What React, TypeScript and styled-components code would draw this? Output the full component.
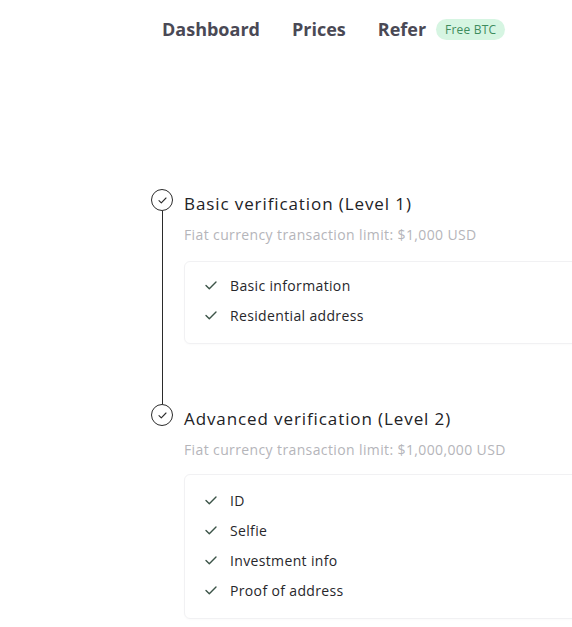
import React from "react";
import styled, { createGlobalStyle } from "styled-components";

const Global = createGlobalStyle`
  html, body { margin: 0; padding: 0; background: #ffffff; overflow: hidden; }
  body { font-family: "Open Sans", "Lato", sans-serif; -webkit-font-smoothing: antialiased; }
`;

const Page = styled.div`
  width: 572px;
  height: 627px;
  overflow: hidden;
  background: #fff;
`;

const Nav = styled.nav`
  display: flex;
  align-items: center;
  height: 58px;
  padding-left: 162px;
  gap: 32px;
`;

const NavLink = styled.span`
  font-size: 18px;
  font-weight: 700;
  color: #4a4955;
`;

const ReferGroup = styled.div`
  display: flex;
  align-items: center;
  gap: 10px;
`;

const Badge = styled.span`
  background: #d6f5e2;
  color: #3e8c5e;
  font-size: 12px;
  font-weight: 500;
  padding: 4px 9px;
  border-radius: 11px;
  line-height: 13px;
  letter-spacing: 0.2px;
`;

const Steps = styled.div`
  padding: 131px 0 0 151px;
  display: flex;
  flex-direction: column;
`;

const Step = styled.div`
  display: grid;
  grid-template-columns: 22px 1fr;
  column-gap: 11px;
`;

const Marker = styled.div`
  display: flex;
  flex-direction: column;
  align-items: center;
`;

const Circle = styled.div`
  width: 20px;
  height: 20px;
  border: 1px solid #2b2b2b;
  border-radius: 50%;
  display: flex;
  align-items: center;
  justify-content: center;
  flex-shrink: 0;
`;

const Connector = styled.div`
  flex: 1;
  width: 1px;
  background: #2b2b2b;
`;

const Body = styled.div<{ $last?: boolean }>`
  padding-bottom: ${(p) => (p.$last ? "0" : "60px")};
`;

const Title = styled.div`
  font-size: 17px;
  line-height: 22px;
  color: #222226;
  margin-top: 4px;
  letter-spacing: 0.9px;
`;

const Subtitle = styled.div`
  font-size: 14px;
  line-height: 18px;
  color: #b5b5ba;
  margin-top: 11px;
  letter-spacing: 0.38px;
`;

const Card = styled.div<{ $tight?: boolean }>`
  margin-top: ${(p) => (p.$tight ? "15px" : "17px")};
  width: 430px;
  border: 1px solid #f1f1f3;
  border-radius: 6px;
  padding: ${(p) => (p.$tight ? "10px 0 13px 0" : "8px 0 13px 0")};
  box-shadow: 0 1px 2px rgba(0, 0, 0, 0.02);
`;

const Item = styled.div`
  display: flex;
  align-items: center;
  height: 30px;
  padding-left: 20px;
  gap: 13px;
  font-size: 14px;
  color: #27272b;
  letter-spacing: 0.35px;
`;

const Check = () => (
  <svg width="12" height="9" viewBox="0 0 12 9" fill="none">
    <polyline points="1,4.5 4.3,7.8 11,1" stroke="#3c5448" strokeWidth="1.4" strokeLinecap="round" strokeLinejoin="round" />
  </svg>
);

const SmallCheck = () => (
  <svg width="9" height="7" viewBox="0 0 9 7" fill="none">
    <polyline points="1,3.6 3.3,5.8 8,1" stroke="#2b2b2b" strokeWidth="1.1" strokeLinecap="round" strokeLinejoin="round" />
  </svg>
);

const steps = [
  {
    title: "Basic verification (Level 1)",
    limit: "Fiat currency transaction limit: $1,000 USD",
    items: ["Basic information", "Residential address"],
  },
  {
    title: "Advanced verification (Level 2)",
    limit: "Fiat currency transaction limit: $1,000,000 USD",
    items: ["ID", "Selfie", "Investment info", "Proof of address"],
  },
];

export default function App() {
  return (
    <Page>
      <Global />
      <Nav>
        <NavLink>Dashboard</NavLink>
        <NavLink>Prices</NavLink>
        <ReferGroup>
          <NavLink>Refer</NavLink>
          <Badge>Free BTC</Badge>
        </ReferGroup>
      </Nav>
      <Steps>
        {steps.map((s, i) => {
          const last = i === steps.length - 1;
          return (
            <Step key={s.title}>
              <Marker>
                <Circle>
                  <SmallCheck />
                </Circle>
                {!last && <Connector />}
              </Marker>
              <Body $last={last}>
                <Title>{s.title}</Title>
                <Subtitle>{s.limit}</Subtitle>
                <Card $tight={last}>
                  {s.items.map((it) => (
                    <Item key={it}>
                      <Check />
                      {it}
                    </Item>
                  ))}
                </Card>
              </Body>
            </Step>
          );
        })}
      </Steps>
    </Page>
  );
}
